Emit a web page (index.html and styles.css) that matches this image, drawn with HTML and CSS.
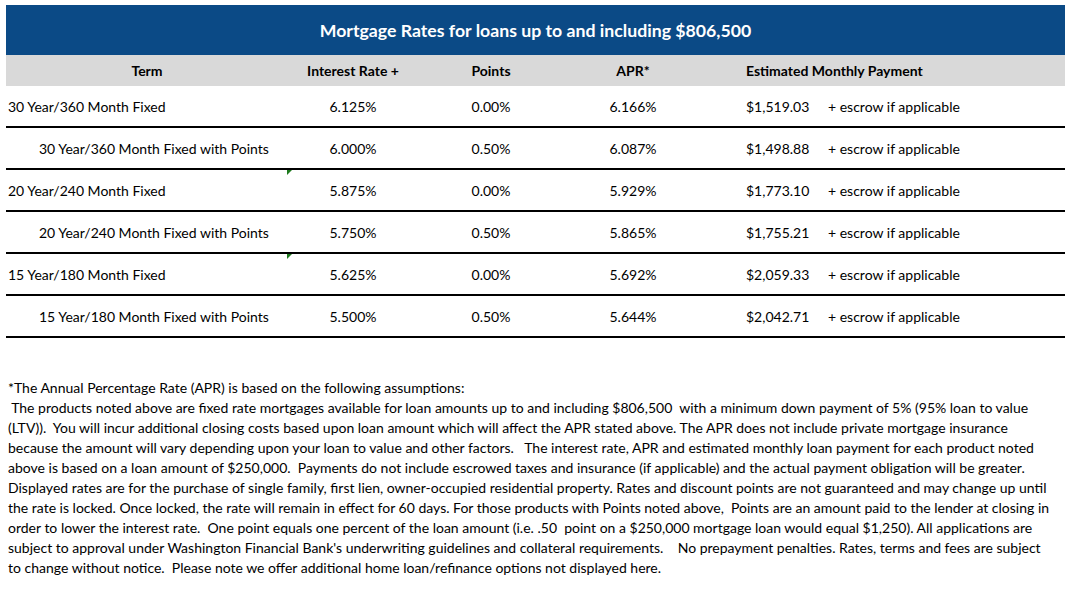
FILE: index.html
```html
<!DOCTYPE html>
<html>
<head>
<meta charset="utf-8">
<link rel="stylesheet" href="styles.css">
</head>
<body>
<div class="sheet">
  <div class="title">Mortgage Rates for loans up to and including $806,500</div>
  <div class="grid head">
    <div class="c term-h">Term</div>
    <div class="c ctr">Interest Rate +</div>
    <div class="c ctr">Points</div>
    <div class="c ctr">APR*</div>
    <div class="c pay-h">Estimated Monthly Payment</div>
  </div>
  <div class="grid row">
    <div class="c term">30 Year/360 Month Fixed</div>
    <div class="c ctr">6.125%</div>
    <div class="c ctr">0.00%</div>
    <div class="c ctr">6.166%</div>
    <div class="c pay"><span class="amt">$1,519.03</span><span>+ escrow if applicable</span></div>
  </div>
  <div class="grid row">
    <div class="c term ind">30 Year/360 Month Fixed with Points</div>
    <div class="c ctr">6.000%</div>
    <div class="c ctr">0.50%</div>
    <div class="c ctr">6.087%</div>
    <div class="c pay"><span class="amt">$1,498.88</span><span>+ escrow if applicable</span></div>
  </div>
  <div class="grid row">
    <div class="c term flag">20 Year/240 Month Fixed</div>
    <div class="c ctr">5.875%</div>
    <div class="c ctr">0.00%</div>
    <div class="c ctr">5.929%</div>
    <div class="c pay"><span class="amt">$1,773.10</span><span>+ escrow if applicable</span></div>
  </div>
  <div class="grid row">
    <div class="c term ind">20 Year/240 Month Fixed with Points</div>
    <div class="c ctr">5.750%</div>
    <div class="c ctr">0.50%</div>
    <div class="c ctr">5.865%</div>
    <div class="c pay"><span class="amt">$1,755.21</span><span>+ escrow if applicable</span></div>
  </div>
  <div class="grid row">
    <div class="c term flag">15 Year/180 Month Fixed</div>
    <div class="c ctr">5.625%</div>
    <div class="c ctr">0.00%</div>
    <div class="c ctr">5.692%</div>
    <div class="c pay"><span class="amt">$2,059.33</span><span>+ escrow if applicable</span></div>
  </div>
  <div class="grid row">
    <div class="c term ind">15 Year/180 Month Fixed with Points</div>
    <div class="c ctr">5.500%</div>
    <div class="c ctr">0.50%</div>
    <div class="c ctr">5.644%</div>
    <div class="c pay"><span class="amt">$2,042.71</span><span>+ escrow if applicable</span></div>
  </div>
  <p class="note">*The Annual Percentage Rate (APR) is based on the following assumptions:<br>
&nbsp;The products noted above are fixed rate mortgages available for loan amounts up to and including $806,500&nbsp; with a minimum down payment of 5% (95% loan to value<br>
(LTV)).&nbsp; You will incur additional closing costs based upon loan amount which will affect the APR stated above. The APR does not include private mortgage insurance<br>
because the amount will vary depending upon your loan to value and other factors.&nbsp;&nbsp; The interest rate, APR and estimated monthly loan payment for each product noted<br>
above is based on a loan amount of $250,000.&nbsp; Payments do not include escrowed taxes and insurance (if applicable) and the actual payment obligation will be greater.<br>
Displayed rates are for the purchase of single family, first lien, owner-occupied residential property. Rates and discount points are not guaranteed and may change up until<br>
the rate is locked. Once locked, the rate will remain in effect for 60 days. For those products with Points noted above,&nbsp; Points are an amount paid to the lender at closing in<br>
order to lower the interest rate.&nbsp; One point equals one percent of the loan amount (i.e. .50&nbsp; point on a $250,000 mortgage loan would equal $1,250). All applications are<br>
subject to approval under Washington Financial Bank's underwriting guidelines and collateral requirements.&nbsp;&nbsp;&nbsp; No prepayment penalties. Rates, terms and fees are subject<br>
to change without notice.&nbsp; Please note we offer additional home loan/refinance options not displayed here.</p>
</div>
</body>
</html>
```

FILE: styles.css
```css
html, body {
  margin: 0;
  padding: 0;
  background: #ffffff;
}
body {
  font-family: Lato, "Open Sans", "Liberation Sans", sans-serif;
  font-size: 14px;
  color: #000000;
}
.sheet {
  padding: 5px 10px 0 6px;
}
.title {
  background: #0b4a86;
  color: #ffffff;
  font-weight: bold;
  font-size: 17.7px;
  height: 50px;
  line-height: 52px;
  text-align: center;
}
.grid {
  display: grid;
  grid-template-columns: 282px 130px 146px 138px 1fr;
  align-items: center;
}
.head {
  background: #d9d9d9;
  height: 31px;
  font-weight: bold;
}
.row {
  height: 40px;
  border-bottom: 2px solid #000000;
}
.c {
  white-space: nowrap;
}
.ctr, .term-h {
  text-align: center;
}
.pay-h, .pay {
  padding-left: 44px;
}
.pay {
  display: flex;
}
.amt {
  width: 82px;
}
.term {
  padding-left: 2px;
  position: relative;
  align-self: stretch;
  display: flex;
  align-items: center;
}
.ind {
  padding-left: 33px;
}
.flag::before {
  content: "";
  position: absolute;
  right: -4px;
  top: 0;
  width: 0;
  height: 0;
  border-top: 5px solid #1e7b1e;
  border-right: 5px solid transparent;
}
.note {
  margin: 40px 0 0 2px;
  line-height: 20px;
  white-space: nowrap;
}
```
